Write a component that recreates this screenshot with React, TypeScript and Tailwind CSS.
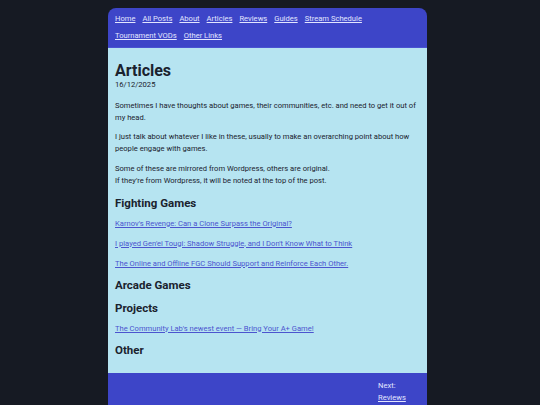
import React from 'react'

const NAV = ['Home', 'All Posts', 'About', 'Articles', 'Reviews', 'Guides', 'Stream Schedule', 'Tournament VODs', 'Other Links']

const SECTIONS: { title: string; links: string[] }[] = [
  {
    title: 'Fighting Games',
    links: [
      "Karnov's Revenge: Can a Clone Surpass the Original?",
      "I played Gen'ei Tougi: Shadow Struggle, and I Don't Know What to Think",
      'The Online and Offline FGC Should Support and Reinforce Each Other.',
    ],
  },
  { title: 'Arcade Games', links: [] },
  { title: 'Projects', links: ["The Community Lab's newest event — Bring Your A+ Game!"] },
  { title: 'Other', links: [] },
]

export default function App() {
  return (
    <div
      className="min-h-screen bg-[#161a23] pt-[8px] pr-[5px] text-[#1a222e]"
      style={{ fontFamily: 'Roboto, "Noto Sans", sans-serif' }}
    >
      <div className="mx-auto w-[319px] overflow-hidden rounded-t-[8px]">
        {/* nav */}
        <header className="bg-[#3d45c8] px-[7px] pt-[2px] pb-[3px] border-b border-[#4a53d2]">
          <nav className="flex flex-wrap gap-x-[7px] text-[7.6px] leading-[17px]">
            {NAV.map((n) => (
              <a key={n} href="#" className="text-[#e2e5ff] underline">
                {n}
              </a>
            ))}
          </nav>
        </header>

        {/* main */}
        <main className="bg-[#b6e4f1] px-[7px] pt-[15px] pb-[16px]">
          <h1 className="text-[16px] font-bold leading-[16px]">Articles</h1>
          <p className="mt-[1px] text-[7.6px] leading-[10px]">16/12/2025</p>

          <p className="mt-[10px] text-[7.6px] leading-[11.5px]">
            Sometimes I have thoughts about games, their communities, etc. and need to get it out of my head.
          </p>
          <p className="mt-[8px] text-[7.6px] leading-[12px]">
            I just talk about whatever I like in these, usually to make an overarching point about how people engage
            with games.
          </p>
          <p className="mt-[8px] text-[7.6px] leading-[12px]">
            Some of these are mirrored from Wordpress, others are original.
            <br />
            If they're from Wordpress, it will be noted at the top of the post.
          </p>

          {SECTIONS.map((s) => (
            <section key={s.title}>
              <h2 className="mt-[8.5px] text-[11.5px] font-bold leading-[14px]">{s.title}</h2>
              {s.links.map((l) => (
                <p key={l} className="mt-[8px] text-[7.6px] leading-[12px]">
                  <a href="#" className="text-[#4b54cf] underline">
                    {l}
                  </a>
                </p>
              ))}
            </section>
          ))}
        </main>

        {/* footer */}
        <footer className="flex justify-end bg-[#3d45c8] px-[7px] pt-[7px] pb-[8px] text-[7.6px] leading-[12px] text-[#e2e5ff]">
          <div className="w-[42px]">
            <p>Next:</p>
            <a href="#" className="underline">
              Reviews
            </a>
            <p>17/11/2025</p>
          </div>
        </footer>
      </div>
    </div>
  )
}
